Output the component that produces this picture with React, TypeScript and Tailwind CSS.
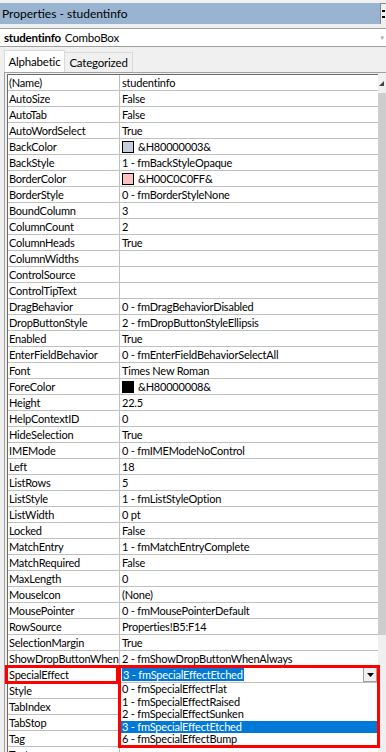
import React from 'react';

type Row = { name: string; value: string; swatch?: string };

const rows: Row[] = [
  { name: '(Name)', value: 'studentinfo' },
  { name: 'AutoSize', value: 'False' },
  { name: 'AutoTab', value: 'False' },
  { name: 'AutoWordSelect', value: 'True' },
  { name: 'BackColor', value: '&H80000003&', swatch: '#c5cedb' },
  { name: 'BackStyle', value: '1 - fmBackStyleOpaque' },
  { name: 'BorderColor', value: '&H00C0C0FF&', swatch: '#ffc0c0' },
  { name: 'BorderStyle', value: '0 - fmBorderStyleNone' },
  { name: 'BoundColumn', value: '3' },
  { name: 'ColumnCount', value: '2' },
  { name: 'ColumnHeads', value: 'True' },
  { name: 'ColumnWidths', value: '' },
  { name: 'ControlSource', value: '' },
  { name: 'ControlTipText', value: '' },
  { name: 'DragBehavior', value: '0 - fmDragBehaviorDisabled' },
  { name: 'DropButtonStyle', value: '2 - fmDropButtonStyleEllipsis' },
  { name: 'Enabled', value: 'True' },
  { name: 'EnterFieldBehavior', value: '0 - fmEnterFieldBehaviorSelectAll' },
  { name: 'Font', value: 'Times New Roman' },
  { name: 'ForeColor', value: '&H80000008&', swatch: '#000000' },
  { name: 'Height', value: '22.5' },
  { name: 'HelpContextID', value: '0' },
  { name: 'HideSelection', value: 'True' },
  { name: 'IMEMode', value: '0 - fmIMEModeNoControl' },
  { name: 'Left', value: '18' },
  { name: 'ListRows', value: '5' },
  { name: 'ListStyle', value: '1 - fmListStyleOption' },
  { name: 'ListWidth', value: '0 pt' },
  { name: 'Locked', value: 'False' },
  { name: 'MatchEntry', value: '1 - fmMatchEntryComplete' },
  { name: 'MatchRequired', value: 'False' },
  { name: 'MaxLength', value: '0' },
  { name: 'MouseIcon', value: '(None)' },
  { name: 'MousePointer', value: '0 - fmMousePointerDefault' },
  { name: 'RowSource', value: 'Properties!B5:F14' },
  { name: 'SelectionMargin', value: 'True' },
  { name: 'ShowDropButtonWhen', value: '2 - fmShowDropButtonWhenAlways' },
];

const after: Row[] = [
  { name: 'Style', value: '' },
  { name: 'TabIndex', value: '' },
  { name: 'TabStop', value: '' },
  { name: 'Tag', value: '' },
  { name: 'Text', value: '' },
];

const options = [
  '0 - fmSpecialEffectFlat',
  '1 - fmSpecialEffectRaised',
  '2 - fmSpecialEffectSunken',
  '3 - fmSpecialEffectEtched',
  '6 - fmSpecialEffectBump',
];

function PropRow({ row }: { row: Row }) {
  return (
    <div className="flex h-[16px] border-b border-[#c0c0c0]">
      <div className="w-[112px] shrink-0 overflow-hidden whitespace-nowrap border-r border-[#c0c0c0] pl-[1px] leading-[15px]">
        {row.name}
      </div>
      <div className="flex flex-1 items-center gap-[4px] pl-[2px] leading-[15px]">
        {row.swatch && (
          <span className="inline-block h-[12px] w-[12px] border border-black" style={{ background: row.swatch }} />
        )}
        <span className="whitespace-nowrap">{row.value}</span>
      </div>
    </div>
  );
}

export default function App() {
  return (
    <div className="relative h-[752px] w-[386px] overflow-hidden bg-[#f0f0f0] font-['Lato',sans-serif] text-[11px] tracking-[-0.2px] text-black">
      {/* title bar */}
      <div className="mt-[3px] flex h-[21px] items-center bg-[#99b4d1]">
        <span className="pl-[2px] text-[12px] tracking-normal">Properties - studentinfo</span>
        <div className="ml-auto h-[21px] w-[6px] border-l border-t border-[#8a8a8a] bg-[#f0f0f0]">
          <svg width="6" height="20" viewBox="0 0 6 20">
            <path d="M1 6h3v2H1zM1 12h3v2H1z" fill="#000" />
          </svg>
        </div>
      </div>

      {/* object combo */}
      <div className="mt-[4px] flex h-[19px] items-center border-y border-[#a0a0a0] bg-white pl-[4px] text-[11.5px]">
        <span className="font-bold">studentinfo</span>
        <span className="ml-[4px]">ComboBox</span>
        <span className="ml-auto pr-[1px] text-[6px] text-[#aaa]">▼</span>
      </div>

      {/* tabs */}
      <div className="mt-[3px] flex h-[22px] items-end pl-[4px] text-[11.5px]">
        <div className="flex h-[22px] w-[61px] items-center justify-center border-x border-t border-[#d9d9d9] bg-white">
          Alphabetic
        </div>
        <div className="flex h-[20px] w-[68px] items-center justify-center border-r border-t border-[#d9d9d9] bg-[#f0f0f0]">
          Categorized
        </div>
      </div>

      {/* grid */}
      <div className="ml-[4px] flex border-l border-t border-[#a0a0a0]">
        <div className="flex-1 border-l border-t border-[#f0f0f0]">
          <div className="ml-[1px] border-l border-t border-[#696969] bg-white">
            {rows.map((r) => (
              <PropRow key={r.name} row={r} />
            ))}

            {/* SpecialEffect row with open drop-down */}
            <div className="relative flex h-[16px] border-b border-[#c0c0c0]">
              <div className="w-[112px] shrink-0 border-r border-[#c0c0c0] pl-[1px] leading-[15px]">SpecialEffect</div>
              <div className="flex flex-1 items-center pl-[2px]">
                <span className="bg-[#0078d7] px-[1px] leading-[13px] text-white">3 - fmSpecialEffectEtched</span>
                <div className="ml-auto mr-[1px] flex h-[15px] w-[14px] items-center justify-center border border-[#a0a0a0] bg-[#f0f0f0]">
                  <svg width="7" height="4" viewBox="0 0 7 4">
                    <path d="M0 0h7L3.5 4z" fill="#000" />
                  </svg>
                </div>
              </div>

              {/* drop-down list */}
              <div className="absolute left-[111px] top-[16px] z-10 flex w-[258px] flex-col bg-white pb-[1px]">
                {options.map((o, i) => (
                  <div
                    key={o}
                    className={`h-[12.6px] overflow-hidden whitespace-nowrap pl-[3px] leading-[12.6px] ${i === 3 ? 'bg-[#0078d7] text-white' : ''}`}
                  >
                    {o}
                  </div>
                ))}
              </div>

              {/* red annotation boxes */}
              <div className="pointer-events-none absolute left-[-3px] top-[-2px] z-30 h-[19px] w-[114px] border-[3px] border-[#ff0000]" />
              <div className="pointer-events-none absolute left-[110px] top-[-2px] z-30 h-[83px] w-[262px] border-[3px] border-[#ff0000]" />
            </div>

            {after.map((r) => (
              <PropRow key={r.name} row={r} />
            ))}
          </div>
        </div>

        {/* scrollbar */}
        <div className="flex w-[8px] shrink-0 flex-col pt-[3px]">
          <div className="flex h-[17px] items-start bg-[#f0f0f0] pl-[1px] pt-[5px]">
            <svg width="6" height="5" viewBox="0 0 6 5">
              <path d="M0 5L5 0v5z" fill="#444" />
            </svg>
          </div>
          <div className="h-[542px] bg-[#cdcdcd]" />
          <div className="flex-1 bg-[#f0f0f0]" />
        </div>
      </div>
    </div>
  );
}
